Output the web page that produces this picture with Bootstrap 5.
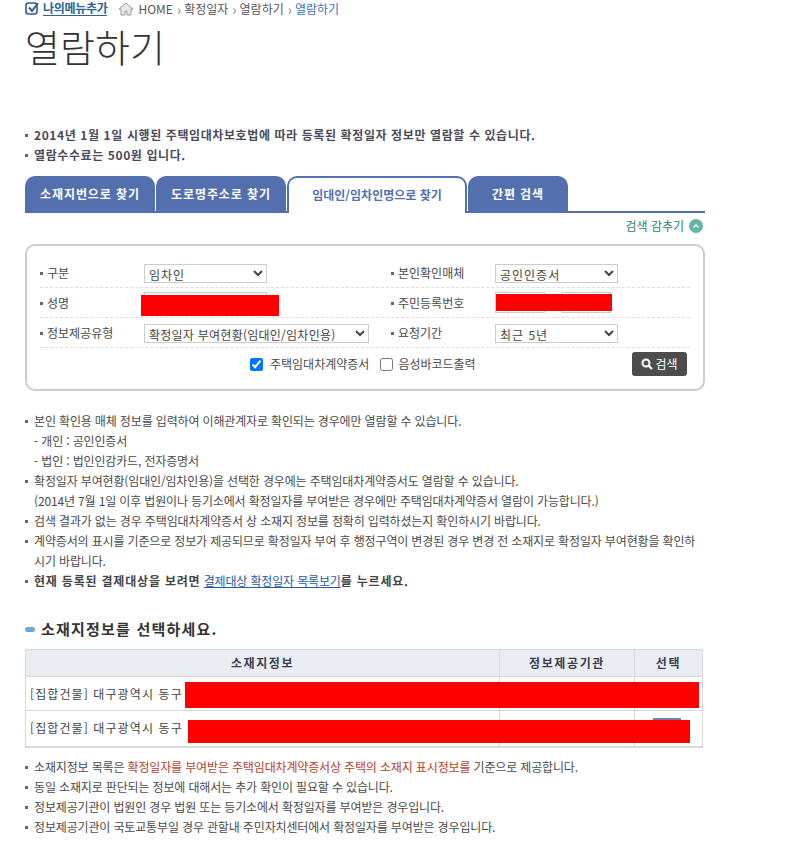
<!DOCTYPE html>
<html lang="ko">
<head>
    <meta charset="UTF-8">
    <meta name="viewport" content="width=device-width, initial-scale=1.0">
    <title>열람하기</title>
    <link rel="stylesheet" href="https://cdn.jsdelivr.net/npm/bootstrap@5.3.3/dist/css/bootstrap.min.css">
    <script src="https://cdn.jsdelivr.net/npm/bootstrap@5.3.3/dist/js/bootstrap.bundle.min.js"></script>
    <style>
        body {
            font-family: "Noto Sans CJK KR", "Liberation Sans", sans-serif;
            font-size: 12px;
            color: #4a4a4a;
            background: #fff;
        }
        .page-wrap { width: 680px; margin-left: 25px; }

        /* top bar */
        .top-bar { height: 17px; line-height: 16px; color: #555; }
        .my-menu { color: #2a6496; font-weight: 700; border-bottom: 1px solid #2a6496; line-height: 14px; margin-left: 3px; margin-right: 11px; letter-spacing: -.3px; }
        .crumb-now { color: #3a6fc0; }
        .crumb-sep { color: #777; margin: 0 3px 0 4px; font-size: 14px; line-height: 14px; }
        .page-title { font-size: 38px; font-weight: 300; color: #333; line-height: 52px; margin: 3px 0 0; height: 105px; }

        /* bullets */
        .dot-list { list-style: none; padding: 0; margin: 0; letter-spacing: -.15px; }
        .dot-list li { line-height: 20px; padding-left: 9px; position: relative; }
        .dot-list li::before { content: ""; position: absolute; left: 0; top: 9px; width: 3px; height: 3px; background: #666; }
        .dot-list li.no-dot::before { display: none; }
        .dot-list.top-note { font-weight: 700; color: #4a4a5a; letter-spacing: .6px; }
        .red-text { color: #b8402a; }

        /* tabs */
        .tab-row { height: 37px; border-bottom: 2px solid #536fae; gap: 1px; margin-top: 11px; }
        .tab-item { display: flex; align-items: center; justify-content: center; height: 37px; background: #536fae; color: #fff; font-weight: 700; border-radius: 10px 10px 0 0; padding-bottom: 2px; letter-spacing: .9px; }
        .tab-item.active-tab { background: #fff; color: #536fae; border: 2px solid #536fae; border-bottom: 0; letter-spacing: 0; }
        .tab-w1, .tab-w2 { width: 130px; }
        .tab-w3 { width: 180px; }
        .tab-w4 { width: 100px; }
        .hide-link { height: 31px; color: #2f7d6b; gap: 5px; padding: 0 2px 6px 0; }
        .hide-icon { width: 14px; height: 14px; border-radius: 50%; background: #63b5a6; }

        /* search box */
        .search-box { height: 147px; border: 2px solid #ccc; border-radius: 10px; padding: 12px 13px 0; }
        .search-row { height: 30px; border-bottom: 1px dashed #ddd; }
        .search-col { width: 351px; flex: none; }
        .search-col + .search-col { width: 299px; }
        .search-label { width: 104px; padding-left: 7px; position: relative; }
        .search-label::before { content: ""; position: absolute; left: 0; top: 8px; width: 3px; height: 3px; background: #666; }
        .info-select { height: 19px; margin-top: 2px; border: 1px solid #ccc; background: #fff; color: #444; font-size: 12px; padding: 0; font-family: inherit; }
        .w-short { width: 123px; letter-spacing: 1px; }
        .w-long { width: 225px; letter-spacing: .25px; }
        .info-input { height: 21px; border: 1px solid #ccc; background: #fff; padding: 0; display: block; }
        .id-box { width: 50px; }
        .check-row { height: 32px; padding-left: 210px; padding-right: 3px; }
        .check-item { width: 13px; height: 13px; margin: 0; }
        .check-gap { margin-left: 11px; }
        .check-label { margin-left: 7px; }
        .check-gap + .check-label { margin-left: 5px; }
        .search-btn { width: 55px; height: 24px; background: #4d4d4d; color: #fff; border-radius: 3px; gap: 2px; font-size: 12px; }
        .mask-wrap { position: relative; }
        .red-mask { position: absolute; background: #f00; }
        .mask-name { left: -3px; top: 3px; width: 138px; height: 21px; }
        .mask-id { left: 1px; top: 2px; width: 116px; height: 17px; }

        /* list and table */
        .guide-list { margin-top: 20px; }
        .guide-list a { color: #1f5ba8; }
        .guide-list strong { letter-spacing: .8px; color: #444; }
        .section-title { font-size: 15px; font-weight: 700; color: #333; margin: 27px 0 9px; line-height: 22px; gap: 6px; letter-spacing: 1.2px; }
        .section-mark { width: 10px; height: 5px; border-radius: 3px; background: #6ba6da; }
        .addr-table { width: 677px; border-collapse: collapse; border: 1px solid #d5d8dd; border-bottom-width: 2px; table-layout: fixed; }
        .addr-table th { height: 27px; background: #e9edf2; color: #3a3d50; text-align: center; border: 1px solid #d5d8dd; padding: 0; font-weight: 700; letter-spacing: 1.6px; }
        .addr-table td { height: 34px; border: 1px solid #d5d8dd; padding: 0 4px; color: #444; letter-spacing: 1.1px; }
        .addr-table .row-tall td { height: 36px; }
        .col-addr { width: 474px; }
        .col-org { width: 135px; }
        .col-pick { width: 68px; }
        .select-mark { width: 28px; height: 20px; background: #6a82b8; margin-left: 14px; }
        .mask-row1 { left: 160px; top: 33px; width: 514px; height: 26px; }
        .mask-row2 { left: 163px; top: 71px; width: 502px; height: 23px; }
        .bottom-list { margin-top: 9px; }
    </style>
</head>
<body>
    <div class="page-wrap">
        <div class="top-bar d-flex align-items-center">
            <svg width="15" height="15" viewBox="0 0 15 15">
                <rect x="1" y="2" width="11" height="11" rx="2.5" fill="none" stroke="#2f5d9a" stroke-width="1.6"/>
                <path d="M4 6.5l3 3.5 6-8" fill="none" stroke="#2f5d9a" stroke-width="2"/>
            </svg>
            <span class="my-menu">나의메뉴추가</span>
            <svg width="16" height="14" viewBox="0 0 16 14" class="me-1">
                <path d="M1 7l7-6 7 6h-2v6H9V9H7v4H3V7z" fill="#e8e8e8" stroke="#999"/>
            </svg>
            <span>HOME</span><span class="crumb-sep">›</span><span>확정일자</span><span class="crumb-sep">›</span><span>열람하기</span><span class="crumb-sep">›</span><span class="crumb-now">열람하기</span>
        </div>
        <h1 class="page-title">열람하기</h1>

        <ul class="dot-list top-note">
            <li>2014년 1월 1일 시행된 주택임대차보호법에 따라 등록된 확정일자 정보만 열람할 수 있습니다.</li>
            <li>열람수수료는 500원 입니다.</li>
        </ul>

        <div class="tab-row d-flex">
            <div class="tab-item tab-w1">소재지번으로 찾기</div>
            <div class="tab-item tab-w2">도로명주소로 찾기</div>
            <div class="tab-item tab-w3 active-tab">임대인/임차인명으로 찾기</div>
            <div class="tab-item tab-w4">간편 검색</div>
        </div>
        <div class="hide-link d-flex justify-content-end align-items-center">
            검색 감추기
            <span class="hide-icon d-flex align-items-center justify-content-center">
                <svg width="6" height="4" viewBox="0 0 6 4"><path d="M0.5 3.5L3 1l2.5 2.5" fill="none" stroke="#fff" stroke-width="1.3"/></svg>
            </span>
        </div>

        <div class="search-box">
            <div class="search-row d-flex align-items-center">
                <div class="search-col d-flex align-items-center">
                    <span class="search-label">구분</span>
                    <select class="info-select w-short"><option>임차인</option></select>
                </div>
                <div class="search-col d-flex align-items-center">
                    <span class="search-label">본인확인매체</span>
                    <select class="info-select w-short"><option>공인인증서</option></select>
                </div>
            </div>
            <div class="search-row d-flex align-items-center">
                <div class="search-col d-flex align-items-center">
                    <span class="search-label">성명</span>
                    <span class="mask-wrap d-block">
                        <input class="info-input w-short" type="text">
                        <span class="red-mask mask-name"></span>
                    </span>
                </div>
                <div class="search-col d-flex align-items-center">
                    <span class="search-label">주민등록번호</span>
                    <span class="mask-wrap d-flex gap-3">
                        <input class="info-input id-box" type="text">
                        <input class="info-input id-box" type="text">
                        <span class="red-mask mask-id"></span>
                    </span>
                </div>
            </div>
            <div class="search-row d-flex align-items-center">
                <div class="search-col d-flex align-items-center">
                    <span class="search-label">정보제공유형</span>
                    <select class="info-select w-long"><option>확정일자 부여현황(임대인/임차인용)</option></select>
                </div>
                <div class="search-col d-flex align-items-center">
                    <span class="search-label">요청기간</span>
                    <select class="info-select w-short"><option>최근 5년</option></select>
                </div>
            </div>
            <div class="d-flex align-items-center check-row">
                <input class="check-item" type="checkbox" checked>
                <span class="check-label">주택임대차계약증서</span>
                <input class="check-item check-gap" type="checkbox">
                <span class="check-label">음성바코드출력</span>
                <span class="search-btn d-flex align-items-center justify-content-center ms-auto">
                    <svg width="12" height="12" viewBox="0 0 12 12"><circle cx="5" cy="5" r="3.5" fill="none" stroke="#fff" stroke-width="2"/><path d="M7.5 7.5L11 11" stroke="#fff" stroke-width="2.2"/></svg>
                    검색
                </span>
            </div>
        </div>

        <ul class="dot-list guide-list">
            <li>본인 확인용 매체 정보를 입력하여 이해관계자로 확인되는 경우에만 열람할 수 있습니다.</li>
            <li class="no-dot">- 개인 : 공인인증서</li>
            <li class="no-dot">- 법인 : 법인인감카드, 전자증명서</li>
            <li>확정일자 부여현황(임대인/임차인용)을 선택한 경우에는 주택임대차계약증서도 열람할 수 있습니다.</li>
            <li class="no-dot">(2014년 7월 1일 이후 법원이나 등기소에서 확정일자를 부여받은 경우에만 주택임대차계약증서 열람이 가능합니다.)</li>
            <li>검색 결과가 없는 경우 주택임대차계약증서 상 소재지 정보를 정확히 입력하셨는지 확인하시기 바랍니다.</li>
            <li>계약증서의 표시를 기준으로 정보가 제공되므로 확정일자 부여 후 행정구역이 변경된 경우 변경 전 소재지로 확정일자 부여현황을 확인하시기 바랍니다.</li>
            <li><strong>현재 등록된 결제대상을 보려면</strong> <a href="#">결제대상 확정일자 목록보기</a><strong>를 누르세요.</strong></li>
        </ul>

        <h2 class="section-title d-flex align-items-center"><span class="section-mark"></span>소재지정보를 선택하세요.</h2>

        <div class="mask-wrap">
            <table class="addr-table">
                <colgroup><col class="col-addr"><col class="col-org"><col class="col-pick"></colgroup>
                <thead>
                    <tr><th>소재지정보</th><th>정보제공기관</th><th>선택</th></tr>
                </thead>
                <tbody>
                    <tr><td>[집합건물] 대구광역시 동구</td><td></td><td></td></tr>
                    <tr class="row-tall"><td>[집합건물] 대구광역시 동구</td><td></td><td><div class="select-mark"></div></td></tr>
                </tbody>
            </table>
            <span class="red-mask mask-row1"></span>
            <span class="red-mask mask-row2"></span>
        </div>

        <ul class="dot-list bottom-list">
            <li>소재지정보 목록은 <span class="red-text">확정일자를 부여받은 주택임대차계약증서상 주택의 소재지 표시정보를</span> 기준으로 제공합니다.</li>
            <li>동일 소재지로 판단되는 정보에 대해서는 추가 확인이 필요할 수 있습니다.</li>
            <li>정보제공기관이 법원인 경우 법원 또는 등기소에서 확정일자를 부여받은 경우입니다.</li>
            <li>정보제공기관이 국토교통부일 경우 관할내 주민자치센터에서 확정일자를 부여받은 경우입니다.</li>
        </ul>
    </div>
</body>
</html>
